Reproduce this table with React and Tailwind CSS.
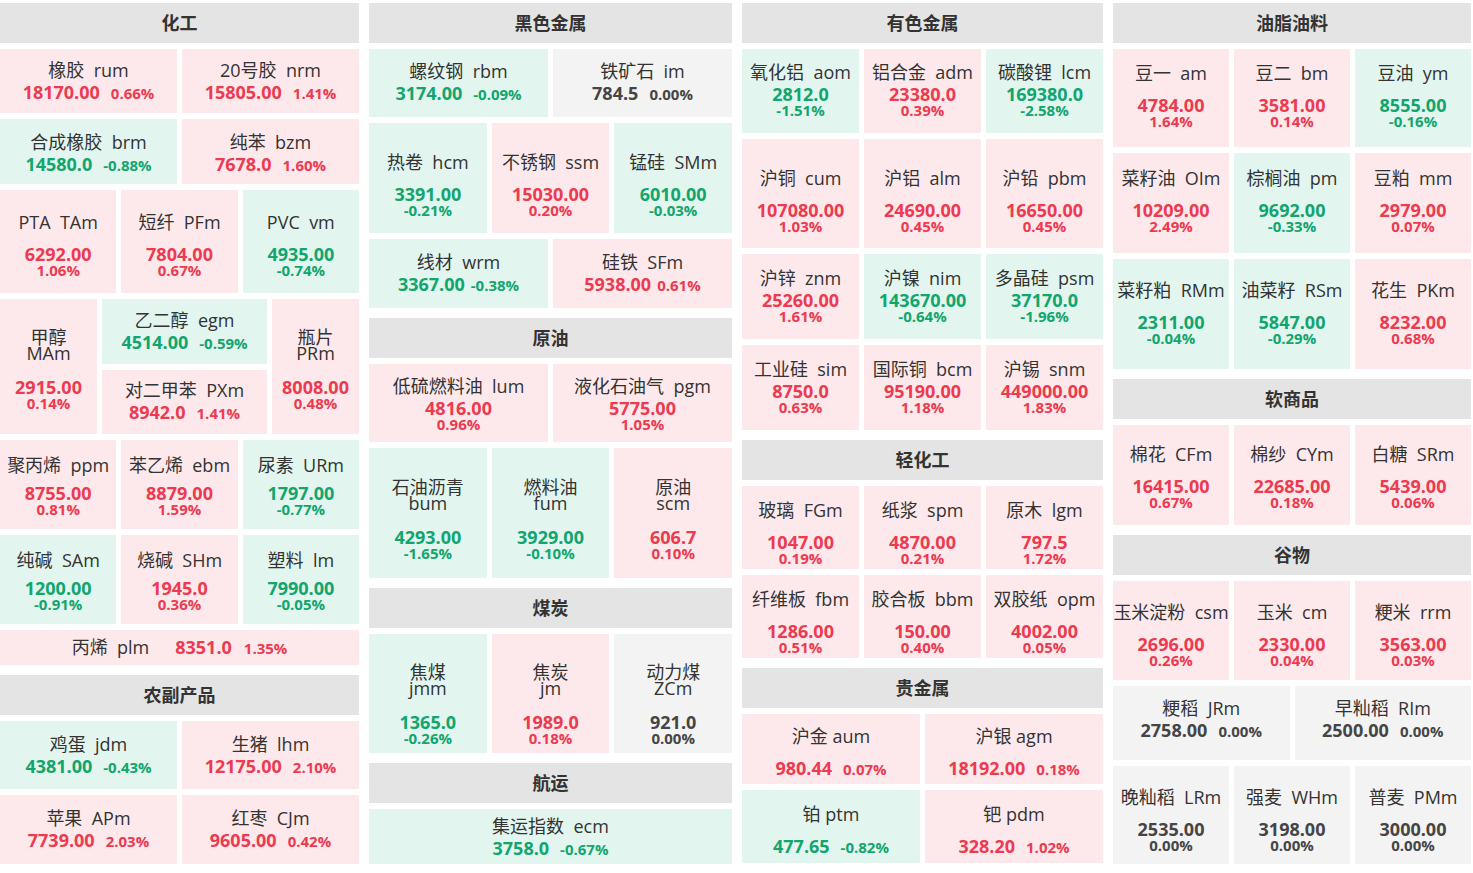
const C = {
  up: { bg: "bg-[#fde9eb]", fg: "text-[#ec3a50]" },
  down: { bg: "bg-[#e2f6ef]", fg: "text-[#12a56e]" },
  flat: { bg: "bg-[#f3f3f3]", fg: "text-[#454545]" },
};

// 名称与价格之间的间距
const GAP = { 1: "mt-px", 7: "mt-[7px]", 11: "mt-[11px]" };

const T = (n, c, p, r, t, v = "row", extra = {}) => ({ n, c, p, r, t, v, ...extra });

const columns = [
  {
    w: "w-[359px]",
    sections: [
      {
        title: "化工",
        rows: [
          { h: "h-[64px]", tiles: [T("橡胶", "rum", "18170.00", "0.66%", "up"), T("20号胶", "nrm", "15805.00", "1.41%", "up")] },
          { h: "h-[65px]", pad: "pt-[4px]", tiles: [T("合成橡胶", "brm", "14580.0", "-0.88%", "down"), T("纯苯", "bzm", "7678.0", "1.60%", "up")] },
          {
            h: "h-[103px]",
            pad: "pt-[4px]",
            tiles: [
              T("PTA", "TAm", "6292.00", "1.06%", "up", "col", { g: 11 }),
              T("短纤", "PFm", "7804.00", "0.67%", "up", "col", { g: 11 }),
              T("PVC", "vm", "4935.00", "-0.74%", "down", "col", { g: 11 }),
            ],
          },
          { block: true },
          {
            h: "h-[89px]",
            tiles: [
              T("聚丙烯", "ppm", "8755.00", "0.81%", "up", "col", { g: 7 }),
              T("苯乙烯", "ebm", "8879.00", "1.59%", "up", "col", { g: 7 }),
              T("尿素", "URm", "1797.00", "-0.77%", "down", "col", { g: 7 }),
            ],
          },
          {
            h: "h-[89px]",
            tiles: [
              T("纯碱", "SAm", "1200.00", "-0.91%", "down", "col", { g: 7 }),
              T("烧碱", "SHm", "1945.0", "0.36%", "up", "col", { g: 7 }),
              T("塑料", "lm", "7990.00", "-0.05%", "down", "col", { g: 7 }),
            ],
          },
          { h: "h-[35px]", tiles: [T("丙烯", "plm", "8351.0", "1.35%", "up", "line")] },
        ],
      },
      {
        title: "农副产品",
        rows: [
          { h: "h-[68px]", tiles: [T("鸡蛋", "jdm", "4381.00", "-0.43%", "down"), T("生猪", "lhm", "12175.00", "2.10%", "up")] },
          { h: "h-[69px]", tiles: [T("苹果", "APm", "7739.00", "2.03%", "up"), T("红枣", "CJm", "9605.00", "0.42%", "up")] },
        ],
      },
    ],
  },
  {
    w: "w-[363px]",
    sections: [
      {
        title: "黑色金属",
        rows: [
          { h: "h-[68px]", pad: "pb-[2px]", tiles: [T("螺纹钢", "rbm", "3174.00", "-0.09%", "down"), T("铁矿石", "im", "784.5", "0.00%", "flat")] },
          {
            h: "h-[110px]",
            pad: "pt-[12px]",
            tiles: [
              T("热卷", "hcm", "3391.00", "-0.21%", "down", "col", { g: 11 }),
              T("不锈钢", "ssm", "15030.00", "0.20%", "up", "col", { g: 11 }),
              T("锰硅", "SMm", "6010.00", "-0.03%", "down", "col", { g: 11 }),
            ],
          },
          {
            h: "h-[69px]",
            tiles: [
              T("线材", "wrm", "3367.00", "-0.38%", "down", "row", { tight: true }),
              T("硅铁", "SFm", "5938.00", "0.61%", "up", "row", { tight: true }),
            ],
          },
        ],
      },
      {
        title: "原油",
        rows: [
          {
            h: "h-[78px]",
            tiles: [
              T("低硫燃料油", "lum", "4816.00", "0.96%", "up", "col", { g: 1 }),
              T("液化石油气", "pgm", "5775.00", "1.05%", "up", "col", { g: 1 }),
            ],
          },
          {
            h: "h-[130px]",
            pad: "pt-[12px]",
            tiles: [
              T("石油沥青", "bum", "4293.00", "-1.65%", "down", "split"),
              T("燃料油", "fum", "3929.00", "-0.10%", "down", "split"),
              T("原油", "scm", "606.7", "0.10%", "up", "split"),
            ],
          },
        ],
      },
      {
        title: "煤炭",
        rows: [
          {
            h: "h-[119px]",
            pad: "pt-[22px]",
            tiles: [
              T("焦煤", "jmm", "1365.0", "-0.26%", "down", "split"),
              T("焦炭", "jm", "1989.0", "0.18%", "up", "split"),
              T("动力煤", "ZCm", "921.0", "0.00%", "flat", "split"),
            ],
          },
        ],
      },
      {
        title: "航运",
        rows: [{ h: "h-[55px]", pad: "pt-[2px]", tiles: [T("集运指数", "ecm", "3758.0", "-0.67%", "down")] }],
      },
    ],
  },
  {
    w: "w-[361px]",
    sections: [
      {
        title: "有色金属",
        rows: [
          {
            h: "h-[84px]",
            pad: "pb-[4px]",
            tiles: [
              T("氧化铝", "aom", "2812.0", "-1.51%", "down", "col", { g: 1 }),
              T("铝合金", "adm", "23380.0", "0.39%", "up", "col", { g: 1 }),
              T("碳酸锂", "lcm", "169380.0", "-2.58%", "down", "col", { g: 1 }),
            ],
          },
          {
            h: "h-[109px]",
            pad: "pt-[12px]",
            tiles: [
              T("沪铜", "cum", "107080.00", "1.03%", "up", "col", { g: 11 }),
              T("沪铝", "alm", "24690.00", "0.45%", "up", "col", { g: 11 }),
              T("沪铅", "pbm", "16650.00", "0.45%", "up", "col", { g: 11 }),
            ],
          },
          {
            h: "h-[85px]",
            pad: "pb-[3px]",
            tiles: [
              T("沪锌", "znm", "25260.00", "1.61%", "up", "col", { g: 1 }),
              T("沪镍", "nim", "143670.00", "-0.64%", "down", "col", { g: 1 }),
              T("多晶硅", "psm", "37170.0", "-1.96%", "down", "col", { g: 1 }),
            ],
          },
          {
            h: "h-[85px]",
            pad: "pb-[3px]",
            tiles: [
              T("工业硅", "sim", "8750.0", "0.63%", "up", "col", { g: 1 }),
              T("国际铜", "bcm", "95190.00", "1.18%", "up", "col", { g: 1 }),
              T("沪锡", "snm", "449000.00", "1.83%", "up", "col", { g: 1 }),
            ],
          },
        ],
      },
      {
        title: "轻化工",
        rows: [
          {
            h: "h-[83px]",
            pad: "pt-[8px]",
            tiles: [
              T("玻璃", "FGm", "1047.00", "0.19%", "up", "col", { g: 11 }),
              T("纸浆", "spm", "4870.00", "0.21%", "up", "col", { g: 11 }),
              T("原木", "lgm", "797.5", "1.72%", "up", "col", { g: 11 }),
            ],
          },
          {
            h: "h-[83px]",
            pad: "pt-[8px]",
            tiles: [
              T("纤维板", "fbm", "1286.00", "0.51%", "up", "col", { g: 11 }),
              T("胶合板", "bbm", "150.00", "0.40%", "up", "col", { g: 11 }),
              T("双胶纸", "opm", "4002.00", "0.05%", "up", "col", { g: 11 }),
            ],
          },
        ],
      },
      {
        title: "贵金属",
        rows: [
          {
            h: "h-[70px]",
            pad: "pt-[7px]",
            tiles: [
              T("沪金", "aum", "980.44", "0.07%", "up", "rowLoose", { sp: " " }),
              T("沪银", "agm", "18192.00", "0.18%", "up", "rowLoose", { sp: " " }),
            ],
          },
          {
            h: "h-[73px]",
            pad: "pt-[7px]",
            tiles: [
              T("铂", "ptm", "477.65", "-0.82%", "down", "rowLoose", { sp: " " }),
              T("钯", "pdm", "328.20", "1.02%", "up", "rowLoose", { sp: " " }),
            ],
          },
        ],
      },
    ],
  },
  {
    w: "w-[358px]",
    sections: [
      {
        title: "油脂油料",
        rows: [
          {
            h: "h-[98px]",
            pad: "pb-[7px]",
            tiles: [
              T("豆一", "am", "4784.00", "1.64%", "up", "col", { g: 11 }),
              T("豆二", "bm", "3581.00", "0.14%", "up", "col", { g: 11 }),
              T("豆油", "ym", "8555.00", "-0.16%", "down", "col", { g: 11 }),
            ],
          },
          {
            h: "h-[100px]",
            pad: "pb-[7px]",
            tiles: [
              T("菜籽油", "OIm", "10209.00", "2.49%", "up", "col", { g: 11 }),
              T("棕榈油", "pm", "9692.00", "-0.33%", "down", "col", { g: 11 }),
              T("豆粕", "mm", "2979.00", "0.07%", "up", "col", { g: 11 }),
            ],
          },
          {
            h: "h-[110px]",
            pad: "pb-[4px]",
            tiles: [
              T("菜籽粕", "RMm", "2311.00", "-0.04%", "down", "col", { g: 11 }),
              T("油菜籽", "RSm", "5847.00", "-0.29%", "down", "col", { g: 11 }),
              T("花生", "PKm", "8232.00", "0.68%", "up", "col", { g: 11 }),
            ],
          },
        ],
      },
      {
        title: "软商品",
        rows: [
          {
            h: "h-[100px]",
            pad: "pt-[2px]",
            tiles: [
              T("棉花", "CFm", "16415.00", "0.67%", "up", "col", { g: 11 }),
              T("棉纱", "CYm", "22685.00", "0.18%", "up", "col", { g: 11 }),
              T("白糖", "SRm", "5439.00", "0.06%", "up", "col", { g: 11 }),
            ],
          },
        ],
      },
      {
        title: "谷物",
        rows: [
          {
            h: "h-[99px]",
            pad: "pt-[6px]",
            tiles: [
              T("玉米淀粉", "csm", "2696.00", "0.26%", "up", "col", { g: 11 }),
              T("玉米", "cm", "2330.00", "0.04%", "up", "col", { g: 11 }),
              T("粳米", "rrm", "3563.00", "0.03%", "up", "col", { g: 11 }),
            ],
          },
          {
            h: "h-[74px]",
            pad: "pb-[7px]",
            tiles: [T("粳稻", "JRm", "2758.00", "0.00%", "flat"), T("早籼稻", "RIm", "2500.00", "0.00%", "flat")],
          },
          {
            h: "h-[98px]",
            pad: "pt-[8px]",
            tiles: [
              T("晚籼稻", "LRm", "2535.00", "0.00%", "flat", "col", { g: 11 }),
              T("强麦", "WHm", "3198.00", "0.00%", "flat", "col", { g: 11 }),
              T("普麦", "PMm", "3000.00", "0.00%", "flat", "col", { g: 11 }),
            ],
          },
        ],
      },
    ],
  },
];

function Tile({ d, className = "flex-1", pad = "" }) {
  const c = C[d.t];
  const label = (
    <div className="whitespace-pre text-[18px] leading-[22px] text-[#333]">
      {d.n}
      {d.sp ?? "  "}
      {d.c}
    </div>
  );

  let body;
  if (d.v === "line") {
    body = (
      <div className="flex items-baseline whitespace-pre">
        <span className="text-[18px] text-[#333]">
          {d.n}  {d.c}
        </span>
        <span className={`ml-[26px] text-[18px] font-bold ${c.fg}`}>{d.p}</span>
        <span className={`ml-[12px] text-[15px] font-bold ${c.fg}`}>{d.r}</span>
      </div>
    );
  } else if (d.v === "row" || d.v === "rowLoose") {
    body = (
      <>
        {label}
        <div className={`flex items-baseline justify-center leading-[22px] ${c.fg} ${d.v === "rowLoose" ? "mt-[10px]" : ""}`}>
          <span className="text-[18px] font-bold">{d.p}</span>
          <span className={`${d.tight ? "ml-[6px]" : "ml-[11px]"} text-[15px] font-bold`}>{d.r}</span>
        </div>
      </>
    );
  } else if (d.v === "split") {
    body = (
      <>
        <div className="text-[18px] leading-[16px] text-[#333]">
          <div>{d.n}</div>
          <div>{d.c}</div>
        </div>
        <div className={`mt-[16px] text-[18px] font-bold leading-[20px] ${c.fg}`}>{d.p}</div>
        <div className={`text-[15px] font-bold leading-[13px] ${c.fg}`}>{d.r}</div>
      </>
    );
  } else {
    body = (
      <>
        {label}
        <div className={`${GAP[d.g || 1]} text-[18px] font-bold leading-[20px] ${c.fg}`}>{d.p}</div>
        <div className={`text-[15px] font-bold leading-[13px] ${c.fg}`}>{d.r}</div>
      </>
    );
  }

  return (
    <div className={`${className} ${c.bg} ${pad} flex min-w-0 flex-col items-center justify-center text-center whitespace-nowrap`}>
      {body}
    </div>
  );
}

function Row({ row }) {
  if (row.block) {
    // 甲醇 / 乙二醇+对二甲苯 / 瓶片
    return (
      <div className="flex h-[135px] gap-[5px]">
        <Tile className="w-[97px]" pad="pt-[6px]" d={T("甲醇", "MAm", "2915.00", "0.14%", "up", "split")} />
        <div className="flex w-[165px] flex-col gap-[6px]">
          <Tile d={T("乙二醇", "egm", "4514.00", "-0.59%", "down")} />
          <Tile d={T("对二甲苯", "PXm", "8942.0", "1.41%", "up")} />
        </div>
        <Tile className="flex-1" pad="pt-[6px]" d={T("瓶片", "PRm", "8008.00", "0.48%", "up", "split")} />
      </div>
    );
  }
  return (
    <div className={`flex ${row.h} gap-[5px]`}>
      {row.tiles.map((t) => (
        <Tile key={t.c} d={t} pad={row.pad} />
      ))}
    </div>
  );
}

export default function App() {
  return (
    <div className="h-[873px] w-[1473px] overflow-hidden bg-white font-['Open_Sans','Noto_Sans_CJK_SC',sans-serif]">
      <div className="flex gap-[10px] pt-[3px]">
        {columns.map((col, i) => (
          <div key={i} className={`${col.w} flex flex-col gap-[10px]`}>
            {col.sections.map((s) => (
              <div key={s.title} className="flex flex-col gap-[6px]">
                <div className="flex h-[40px] items-center justify-center bg-[#e4e4e4] text-[18px] font-bold text-[#333]">
                  {s.title}
                </div>
                {s.rows.map((r, j) => (
                  <Row key={j} row={r} />
                ))}
              </div>
            ))}
          </div>
        ))}
      </div>
    </div>
  );
}
